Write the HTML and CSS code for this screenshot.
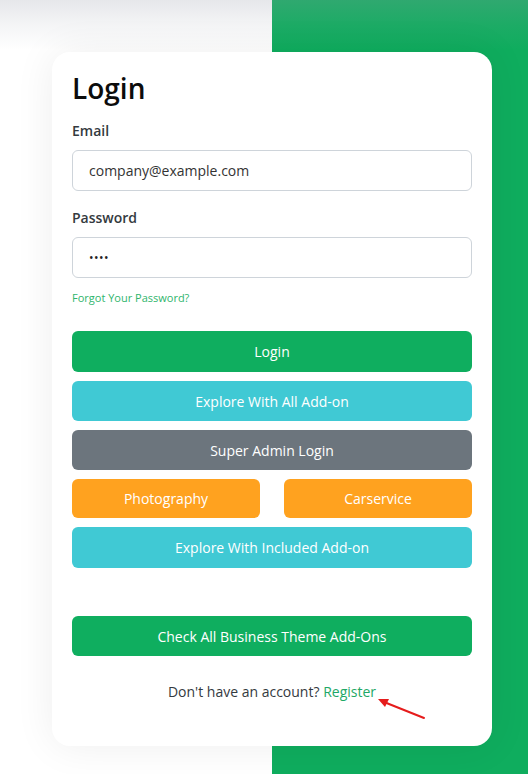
FILE: index.html
```html
<!DOCTYPE html>
<html lang="en">
<head>
<meta charset="utf-8">
<title>Login</title>
<link rel="stylesheet" href="styles.css">
</head>
<body>
<div class="page">
  <div class="card">
    <h1 class="title">Login</h1>
    <div class="field">
      <label class="label">Email</label>
      <div class="input">company@example.com</div>
    </div>
    <div class="field">
      <label class="label">Password</label>
      <div class="input dots">••••</div>
    </div>
    <a class="forgot">Forgot Your Password?</a>
    <div class="buttons">
      <div class="btn green h41">Login</div>
      <div class="btn cyan">Explore With All Add-on</div>
      <div class="btn gray">Super Admin Login</div>
      <div class="pair">
        <div class="btn orange h39">Photography</div>
        <div class="btn orange h39">Carservice</div>
      </div>
      <div class="btn cyan h41">Explore With Included Add-on</div>
    </div>
    <div class="btn green theme">Check All Business Theme Add-Ons</div>
    <p class="register">Don't have an account? <a class="reg-link">Register</a></p>
    <svg class="arrow" width="60" height="30" viewBox="0 0 60 30">
      <line x1="52" y1="24" x2="12" y2="8" stroke="#e51c1c" stroke-width="2" stroke-linecap="round"/>
      <polygon points="6,5 17,5 13,13" fill="#e51c1c"/>
    </svg>
  </div>
</div>
</body>
</html>
```
FILE: styles.css
```css
* { box-sizing: border-box; }
html, body { margin: 0; padding: 0; }
body {
  font-family: "Open Sans", "Noto Sans", sans-serif;
  width: 528px;
  height: 774px;
  overflow: hidden;
}
.page {
  position: relative;
  width: 528px;
  height: 774px;
  background:
    linear-gradient(to bottom, rgba(150,155,168,0.24) 0px, rgba(150,155,168,0.10) 25px, rgba(150,155,168,0) 50px),
    linear-gradient(to right, #ffffff 0, #ffffff 272px, #0fad5e 272px, #0fad5e 100%);
  padding-top: 52px;
}
.card {
  position: relative;
  margin-left: 52px;
  width: 440px;
  height: 694px;
  background: #fff;
  border-radius: 18px;
  box-shadow: 0 0 40px rgba(0,0,0,0.07);
  padding: 18px 20px 0 20px;
  display: flex;
  flex-direction: column;
}
.title {
  margin: 0;
  font-size: 28px;
  line-height: 37px;
  font-weight: 600;
  color: #0c0c0c;
}
.field { display: flex; flex-direction: column; margin-bottom: 16px; }
.field:first-of-type { margin-top: 13px; }
.label {
  font-size: 14px;
  line-height: 21px;
  font-weight: 600;
  color: #343a40;
  margin-bottom: 9px;
}
.input {
  height: 41px;
  border: 1px solid #ced4da;
  border-radius: 6px;
  padding: 0 16px;
  display: flex;
  align-items: center;
  font-size: 14px;
  color: #333;
}
.dots { font-size: 12px; letter-spacing: 0.5px; color: #222; }
.forgot {
  margin-top: -4px;
  font-size: 11px;
  line-height: 16px;
  color: #2fb56c;
}
.buttons {
  margin-top: 25px;
  display: flex;
  flex-direction: column;
  gap: 9px;
}
.btn {
  height: 40px;
  border-radius: 6px;
  color: #fff;
  font-size: 14px;
  display: flex;
  align-items: center;
  justify-content: center;
}
.h41 { height: 41px; }
.h39 { height: 39px; }
.green { background: #0fae5f; }
.cyan { background: #40c9d4; }
.gray { background: #6c757d; }
.orange { background: #ffa21f; }
.pair { display: grid; grid-template-columns: 1fr 1fr; gap: 24px; }
.theme { margin-top: 48px; }
.register {
  margin: 25px 0 0 0;
  text-align: center;
  font-size: 14px;
  line-height: 21px;
  color: #343a40;
}
.reg-link { color: #1ea866; }
.arrow {
  position: absolute;
  left: 320px;
  top: 642px;
}
```
